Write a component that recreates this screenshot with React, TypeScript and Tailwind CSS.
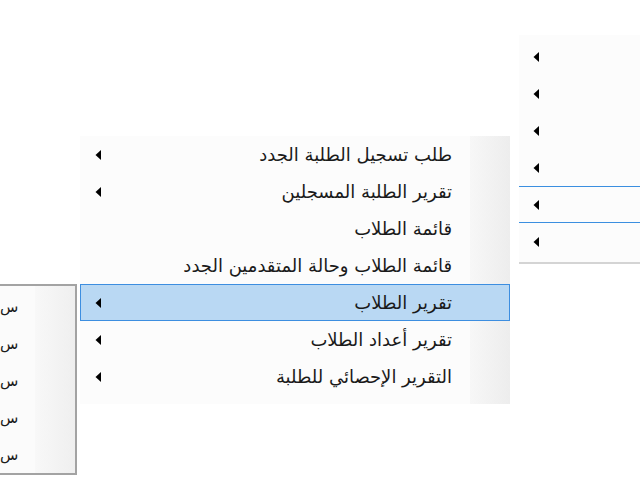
import React from 'react';

const Arrow: React.FC = () => (
  <svg width="6" height="10" viewBox="0 0 6 10" className="shrink-0">
    <path d="M6 0 L0.5 5 L6 10 Z" fill="#000" />
  </svg>
);

const middleItems = [
  { label: 'طلب تسجيل الطلبة الجدد', sub: true },
  { label: 'تقرير الطلبة المسجلين', sub: true },
  { label: 'قائمة الطلاب', sub: false },
  { label: 'قائمة الطلاب وحالة المتقدمين الجدد', sub: false },
  { label: 'تقرير الطلاب', sub: true, active: true },
  { label: 'تقرير أعداد الطلاب', sub: true },
  { label: 'التقرير الإحصائي للطلبة', sub: true },
];

const font = { fontFamily: '"DejaVu Sans", "Noto Sans", sans-serif' };

export default function App() {
  return (
    <div className="relative w-[640px] h-[480px] bg-white overflow-hidden text-[18px] text-[#1a1a1a]" style={font}>
      {/* right menu, partly off screen */}
      <div className="absolute left-[519px] top-[35px] w-[140px] h-[229px] bg-[#fcfcfc] border-b-2 border-[#d4d4d4] pt-[3px]">
        {[0, 1, 2, 3, 4, 5].map((i) => (
          <div
            key={i}
            className={
              'h-[37px] flex items-center pl-[14px] ' +
              (i === 4 ? 'border-y border-[#3b8fe0]' : '')
            }
          >
            <Arrow />
          </div>
        ))}
      </div>

      {/* left menu, partly off screen */}
      <div className="absolute left-0 top-[284px] w-[77px] h-[191px] border-2 border-l-0 border-[#a3a3a3] bg-[#fbfbfb] flex" dir="rtl">
        <div className="w-[40px] bg-gradient-to-l from-[#efefef] to-[#f8f8f8]" />
        <div className="flex-1 pt-[3px]">
          {[0, 1, 2, 3, 4].map((i) => (
            <div key={i} className="h-[37px] flex items-center justify-end">
              <span className="text-[15px]">س</span>
            </div>
          ))}
        </div>
      </div>

      {/* middle menu */}
      <div className="absolute left-[80px] top-[136px] w-[430px] h-[268px] bg-[#fcfcfc] flex" dir="rtl">
        <div className="w-[40px] bg-gradient-to-l from-[#ededed] to-[#f7f7f7]" />
        <div className="absolute inset-0">
          {middleItems.map((it, i) => (
            <div
              key={i}
              className={
                'h-[37px] flex items-center justify-between pr-[57px] pl-[14px] border ' +
                (it.active ? 'bg-[#b9d8f3] border-[#3d8ee0]' : 'border-transparent')
              }
            >
              <span className="leading-none">{it.label}</span>
              {it.sub ? <Arrow /> : null}
            </div>
          ))}
        </div>
      </div>
    </div>
  );
}
